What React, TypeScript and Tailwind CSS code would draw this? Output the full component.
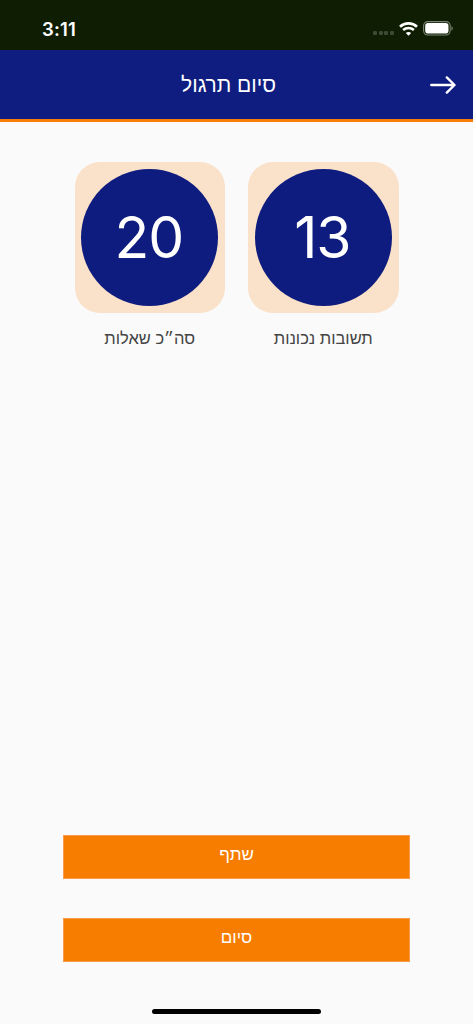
const STATS = [
  { value: "20", label: "סה״כ שאלות" },
  { value: "13", label: "תשובות נכונות" },
];

const ACTIONS = ["שתף", "סיום"];

export default function App() {
  return (
    <main className="flex h-screen w-full flex-col overflow-hidden bg-[#fafafa] font-['Liberation_Sans',sans-serif]">
      <StatusBar />
      <Header title="סיום תרגול" />

      <section className="mt-10 flex justify-center gap-[23px]">
        {STATS.map((stat) => (
          <StatCard key={stat.label} value={stat.value} label={stat.label} />
        ))}
      </section>

      <div className="mt-auto flex flex-col gap-[39px] px-[63px]">
        {ACTIONS.map((label) => (
          <ActionButton key={label} label={label} />
        ))}
      </div>

      <div className="mx-auto mt-[47px] mb-2.5 h-[5px] w-[169px] shrink-0 rounded-full bg-black" />
    </main>
  );
}

function StatusBar() {
  return (
    <div className="flex h-[50px] shrink-0 items-center justify-between bg-[#0f1e03] pt-[7px] pr-[19px] pl-[42px] text-white">
      <span className="pt-px font-['Inter',sans-serif] text-[18.5px] leading-none font-semibold tracking-[0.2px]">
        3:11
      </span>
      <div className="flex items-center gap-[5px]">
        <div className="mt-[9px] flex gap-[1.7px]">
          <SignalDot />
          <SignalDot />
          <SignalDot />
          <SignalDot />
        </div>
        <WifiIcon />
        <BatteryIcon />
      </div>
    </div>
  );
}

function SignalDot() {
  return <span className="h-1 w-1 rounded-[1.2px] bg-[#3e4b34]" />;
}

function Header({ title }: { title: string }) {
  return (
    <header className="flex h-[72px] shrink-0 items-center border-b-[3px] border-[#f97c08] bg-[#0e1d7f] pr-4 text-white">
      <h1 dir="rtl" className="flex-1 pl-[28px] text-center text-[21px] leading-none">
        {title}
      </h1>
      <button type="button" aria-label="חזרה">
        <ArrowIcon />
      </button>
    </header>
  );
}

function StatCard({ value, label }: { value: string; label: string }) {
  return (
    <div className="flex w-[150.5px] flex-col items-center">
      <div className="flex h-[151px] w-full items-center justify-center rounded-[25px] bg-[#fae1c9]">
        <div className="flex h-[137px] w-[137px] items-center justify-center rounded-full bg-[#0d1c7e] pr-0.5 font-['Inter',sans-serif] text-[57px] leading-none tracking-[-1.2px] text-white">
          {value}
        </div>
      </div>
      <p dir="rtl" className="mt-[15px] text-[16.5px] leading-5 whitespace-nowrap text-[#444]">
        {label}
      </p>
    </div>
  );
}

function ActionButton({ label }: { label: string }) {
  return (
    <button
      type="button"
      dir="rtl"
      className="flex h-11 w-full items-center justify-center border border-[#fb9a4b] bg-[#f77d00] pb-[5px] text-[17px] leading-none text-white"
    >
      {label}
    </button>
  );
}

function ArrowIcon() {
  return (
    <svg
      className="block h-[20px] w-[28px]"
      viewBox="0 0 28 20"
      fill="none"
      stroke="currentColor"
      strokeWidth="2.4"
      strokeLinecap="round"
      strokeLinejoin="round"
    >
      <path d="M2.3 10H25.5M17.8 2.4L25.5 10L17.8 17.6" />
    </svg>
  );
}

function WifiIcon() {
  return (
    <svg className="block h-[14px] w-[19px]" viewBox="0 0 19 14" fill="none" stroke="currentColor">
      <path d="M1 4.7C5.8 0.2 13.2 0.2 18 4.7" strokeWidth="2.6" />
      <path d="M4.1 8C7.2 5.2 11.8 5.2 14.9 8" strokeWidth="2.5" />
      <path
        d="M9.5 13.7L6.8 11C8.3 9.7 10.7 9.7 12.2 11Z"
        fill="currentColor"
        stroke="none"
      />
    </svg>
  );
}

function BatteryIcon() {
  return (
    <svg className="block h-[15px] w-[31px]" viewBox="0 0 31 15">
      <rect
        x="0.6"
        y="0.6"
        width="26.6"
        height="13.4"
        rx="4.2"
        fill="none"
        stroke="#7c8574"
        strokeWidth="1.1"
      />
      <rect x="2.2" y="2.1" width="23.3" height="10.4" rx="2.8" fill="white" />
      <path d="M28.5 5.2C30.3 5.9 30.3 8.8 28.5 9.5Z" fill="#7c8574" />
    </svg>
  );
}
